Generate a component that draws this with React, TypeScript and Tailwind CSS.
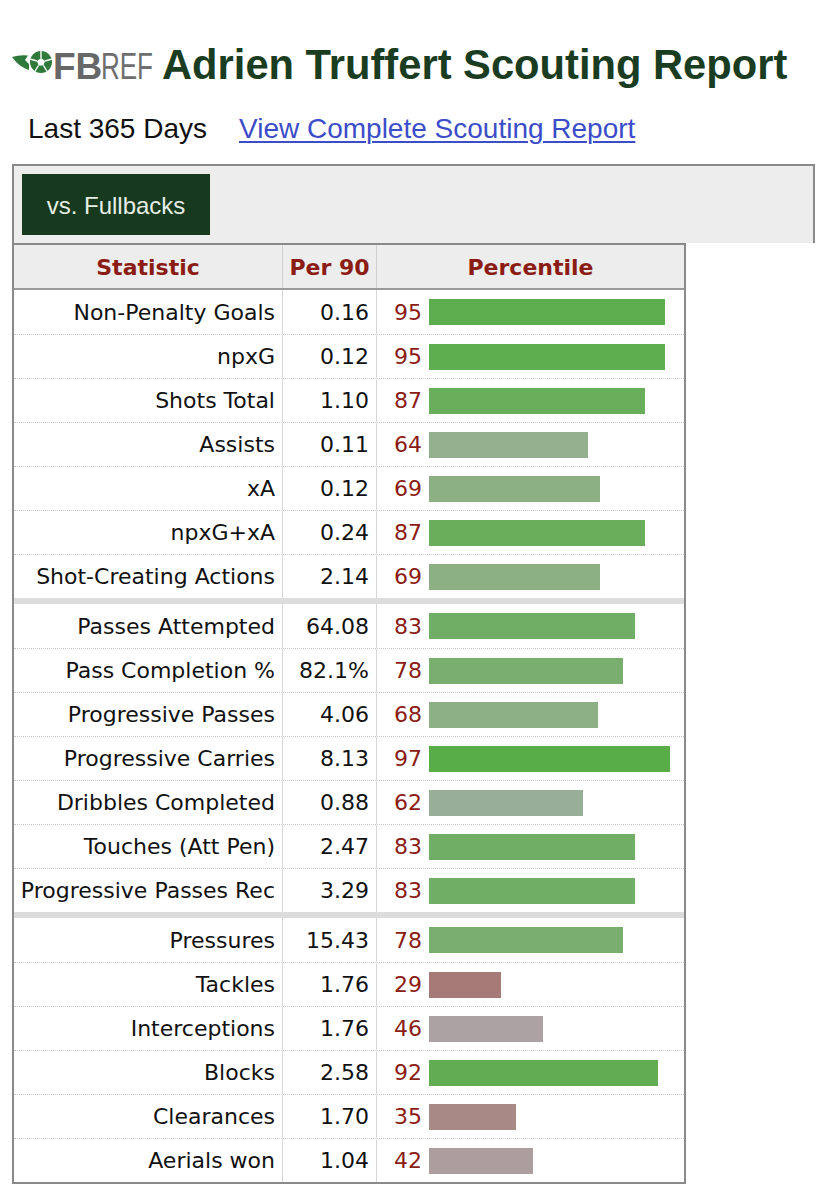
import React from "react"

type Stat = { name: string; per90: string; pct: number }

const groups: Stat[][] = [
  [
    { name: "Non-Penalty Goals", per90: "0.16", pct: 95 },
    { name: "npxG", per90: "0.12", pct: 95 },
    { name: "Shots Total", per90: "1.10", pct: 87 },
    { name: "Assists", per90: "0.11", pct: 64 },
    { name: "xA", per90: "0.12", pct: 69 },
    { name: "npxG+xA", per90: "0.24", pct: 87 },
    { name: "Shot-Creating Actions", per90: "2.14", pct: 69 },
  ],
  [
    { name: "Passes Attempted", per90: "64.08", pct: 83 },
    { name: "Pass Completion %", per90: "82.1%", pct: 78 },
    { name: "Progressive Passes", per90: "4.06", pct: 68 },
    { name: "Progressive Carries", per90: "8.13", pct: 97 },
    { name: "Dribbles Completed", per90: "0.88", pct: 62 },
    { name: "Touches (Att Pen)", per90: "2.47", pct: 83 },
    { name: "Progressive Passes Rec", per90: "3.29", pct: 83 },
  ],
  [
    { name: "Pressures", per90: "15.43", pct: 78 },
    { name: "Tackles", per90: "1.76", pct: 29 },
    { name: "Interceptions", per90: "1.76", pct: 46 },
    { name: "Blocks", per90: "2.58", pct: 92 },
    { name: "Clearances", per90: "1.70", pct: 35 },
    { name: "Aerials won", per90: "1.04", pct: 42 },
  ],
]

// sampled bar colours, keyed by percentile
const barColors: Record<number, string> = {
  97: "#59ad48",
  95: "#5ead4e",
  92: "#62ad52",
  87: "#69ae5b",
  83: "#71ae65",
  78: "#79ae6e",
  69: "#8cb084",
  68: "#8eb086",
  64: "#94b08f",
  62: "#99ae96",
  46: "#aca2a3",
  42: "#ac9e9f",
  35: "#a88986",
  29: "#a67b77",
}

function Logo() {
  return (
    <svg width="144" height="40" viewBox="0 -2 144 40" className="shrink-0 overflow-visible">
      {/* speed tail */}
      <path d="M2 10 Q 10 7.5 18 8.5 L 15 13 L 19 17 L 19 23 Q 9 20 2 10 Z" fill="#2f7a3b" />
      {/* ball */}
      <circle cx="31" cy="15" r="11" fill="#2f7a3b" />
      <polygon points="31,11 35,14 33.5,18.5 28.5,18.5 27,14" fill="#fff" />
      <g stroke="#fff" strokeWidth="1.4">
        <line x1="31" y1="11" x2="31" y2="3" />
        <line x1="35" y1="14" x2="42" y2="12" />
        <line x1="33.5" y1="18.5" x2="37.5" y2="25" />
        <line x1="28.5" y1="18.5" x2="24.5" y2="25" />
        <line x1="27" y1="14" x2="20" y2="12" />
      </g>
      <text
        x="43"
        y="31.5"
        fontFamily="'Liberation Sans', Arial, sans-serif"
        fontWeight="700"
        fontSize="37"
        fill="#676767"
      >
        FB
      </text>
      <text
        x="91"
        y="31.5"
        fontFamily="'Liberation Sans', Arial, sans-serif"
        fontWeight="400"
        fontSize="37"
        fill="#6e6e6e"
        textLength="52"
        lengthAdjust="spacingAndGlyphs"
      >
        REF
      </text>
    </svg>
  )
}

function Row({ s, first }: { s: Stat; first: boolean }) {
  return (
    <div
      className={
        "grid grid-cols-[269px_94px_1fr] h-[44px] " +
        (first ? "" : "border-t border-dotted border-[#c8c8c8]")
      }
    >
      <div className="border-r border-[#d6d6d6] flex items-center justify-end pr-[7px]">
        {s.name}
      </div>
      <div className="border-r border-[#d6d6d6] flex items-center justify-end pr-[7px]">
        {s.per90}
      </div>
      <div className="flex items-center pl-[17px]">
        <span className="w-[28px] text-[#8b1c14]">{s.pct}</span>
        <span
          className="ml-[7px] h-[26px]"
          style={{ width: Math.round(s.pct * 2.485), backgroundColor: barColors[s.pct] }}
        />
      </div>
    </div>
  )
}

export default function App() {
  return (
    <div className="w-[828px] min-h-[1199px] bg-white pt-[40px] font-['Liberation_Sans',Arial,sans-serif]">
      <div className="flex items-center h-[50px] pl-[10px]">
        <Logo />
        <h1 className="ml-[8px] text-[41.7px] font-bold text-[#1a3d22] leading-none">
          Adrien Truffert Scouting Report
        </h1>
      </div>

      <div className="flex items-center h-[40px] mt-[19px] pl-[28px] text-[28px] text-[#111]">
        <span>Last 365 Days</span>
        <a href="#" className="ml-[32px] text-[#3c4dc9] underline underline-offset-[3px] decoration-[1.5px]">
          View Complete Scouting Report
        </a>
      </div>

      <div className="ml-[12px] mt-[15px] w-[803px] h-[79px] border-2 border-b-0 border-[#8a8a8a] bg-[#ededed] pl-[8px] pt-[8px]">
        <div className="w-[188px] h-[61px] bg-[#173a1f] text-[#e6eee6] text-[24px] flex items-center justify-center pt-[3px]">
          vs. Fullbacks
        </div>
      </div>

      <div className="ml-[12px] w-[674px] border-2 border-[#8a8a8a] font-['DejaVu_Sans',Verdana,sans-serif] text-[22px] text-[#111]">
        <div className="grid grid-cols-[269px_94px_1fr] h-[45px] bg-[#ededed] border-b-2 border-[#9a9a9a] font-bold text-[#8b1c14]">
          <div className="border-r border-[#d0d0d0] flex items-center justify-center pt-[2px]">Statistic</div>
          <div className="border-r border-[#d0d0d0] flex items-center justify-center pt-[2px]">Per 90</div>
          <div className="flex items-center justify-center pt-[2px]">Percentile</div>
        </div>
        {groups.map((g, gi) => (
          <div key={gi} className={gi > 0 ? "border-t-[6px] border-[#dcdcdc]" : ""}>
            {g.map((s, i) => (
              <Row key={s.name} s={s} first={i === 0} />
            ))}
          </div>
        ))}
      </div>
    </div>
  )
}
